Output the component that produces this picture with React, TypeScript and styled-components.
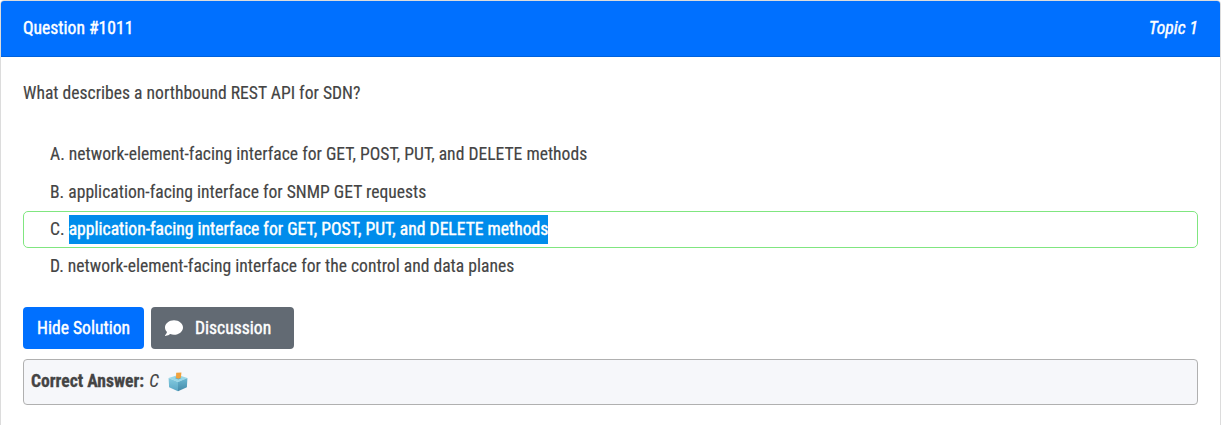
import React from "react";
import styled, { createGlobalStyle } from "styled-components";

const Global = createGlobalStyle`
  * { box-sizing: border-box; }
  body {
    margin: 0;
    background: #fff;
    color: #444;
    font-family: "Roboto Condensed", Roboto, sans-serif;
    font-stretch: 75%;
    font-size: 17.6px;
    line-height: 29px;
    -webkit-text-stroke: 0.15px currentColor;
    overflow: hidden;
  }
`;

const Card = styled.main`
  width: 1221px;
  height: 440px;
  border: 1px solid #dcdcdc;
  border-radius: 4px;
  overflow: hidden;
`;

const Header = styled.header`
  display: flex;
  justify-content: space-between;
  height: 56px;
  padding: 13px 22px 12px;
  border-bottom: 1px solid #0062dd;
  background: #0070ff;
  color: #fff;
`;

const Title = styled.span`
  -webkit-text-stroke-width: 0.4px;
`;

const Topic = styled(Title)`
  font-style: italic;
`;

const Body = styled.section`
  padding: 22px;
`;

const Prompt = styled.p`
  margin: 0 0 28.3px;
`;

const Choices = styled.ul`
  margin: 0;
  padding: 0;
  list-style: none;
`;

const Choice = styled.li<{ $correct?: boolean }>`
  height: 37.3px;
  padding: 3px 26px;
  border: 1px solid ${(p) => (p.$correct ? "#80e680" : "transparent")};
  border-radius: 5px;
`;

const Selected = styled.span`
  display: inline-block;
  background: #008ceb;
  color: #fff;
  -webkit-text-stroke: 0.4px #fff;
`;

const Actions = styled.div`
  display: flex;
  gap: 7px;
  margin-top: 21.5px;
`;

const Button = styled.button<{ $secondary?: boolean }>`
  display: flex;
  align-items: center;
  width: ${(p) => (p.$secondary ? 143 : 121)}px;
  height: 42px;
  padding: 1px 14px 0;
  border: 0;
  border-radius: 4px;
  background: ${(p) => (p.$secondary ? "#626a73" : "#0070ff")};
  color: #fff;
  font: inherit;
  font-stretch: 75%;
  -webkit-text-stroke: 0.4px #fff;
  white-space: nowrap;
  svg { margin-right: 12px; }
`;

const Answer = styled.div`
  display: flex;
  align-items: center;
  height: 46px;
  margin-top: 10px;
  padding: 0 8px 0 7px;
  border: 1px solid #b0b0b0;
  border-radius: 4px;
  background: #f6f7fa;
  svg { margin-left: 9px; }
`;

const Label = styled.strong`
  -webkit-text-stroke-width: 0.3px;
`;

const Letter = styled.em`
  margin-left: 5px;
`;

const Bubble = () => (
  <svg width="18" height="18" viewBox="0 0 512 512" fill="#fff">
    <path d="M256 32C114.600 32 0 125.100 0 240c0 49.600 21.400 95 57 130.700C44.500 421.100 2.700 466 2.200 466.500c-2.200 2.300-2.800 5.700-1.500 8.700S4.800 480 8 480c66.300 0 116-31.800 140.600-51.400 32.700 12.300 69 19.400 107.400 19.400 141.400 0 256-93.100 256-208S397.400 32 256 32z" />
  </svg>
);

const Ballot = () => (
  <svg width="20" height="20" viewBox="0 0 20 20">
    <defs>
      <linearGradient id="left" x1="0" y1="0" x2="0" y2="1">
        <stop offset="0" stopColor="#84cbe0" />
        <stop offset="1" stopColor="#5aa6c4" />
      </linearGradient>
      <linearGradient id="right" x1="0" y1="0" x2="0" y2="1">
        <stop offset="0" stopColor="#6ab8d2" />
        <stop offset="1" stopColor="#4489a8" />
      </linearGradient>
    </defs>
    <path d="M.6 6 10 3l9.400 3L10 10z" fill="#98d8e8" />
    <path d="M.6 6 10 10v9.300L1.100 15.200z" fill="url(#left)" />
    <path d="M19.400 6 10 10v9.300l8.900-4.100z" fill="url(#right)" />
    <path d="m6.800 6 3.200-1.200L13.600 6 10.400 7.400z" fill="#5fa5ba" />
    <path d="M8.200.8 13.400.4 12.900 5.700 10.400 6.800 8 5.900z" fill="#f0a23e" />
  </svg>
);

export default function App() {
  return (
    <>
      <Global />
      <Card>
        <Header>
          <Title>Question #1011</Title>
          <Topic>Topic 1</Topic>
        </Header>
        <Body>
          <Prompt>What describes a northbound REST API for SDN?</Prompt>
          <Choices>
            <Choice>A. network-element-facing interface for GET, POST, PUT, and DELETE methods</Choice>
            <Choice>B. application-facing interface for SNMP GET requests</Choice>
            <Choice $correct>
              C. <Selected>application-facing interface for GET, POST, PUT, and DELETE methods</Selected>
            </Choice>
            <Choice>D. network-element-facing interface for the control and data planes</Choice>
          </Choices>
          <Actions>
            <Button>Hide Solution</Button>
            <Button $secondary><Bubble />Discussion</Button>
          </Actions>
          <Answer>
            <Label>Correct Answer:</Label>
            <Letter>C</Letter>
            <Ballot />
          </Answer>
        </Body>
      </Card>
    </>
  );
}
